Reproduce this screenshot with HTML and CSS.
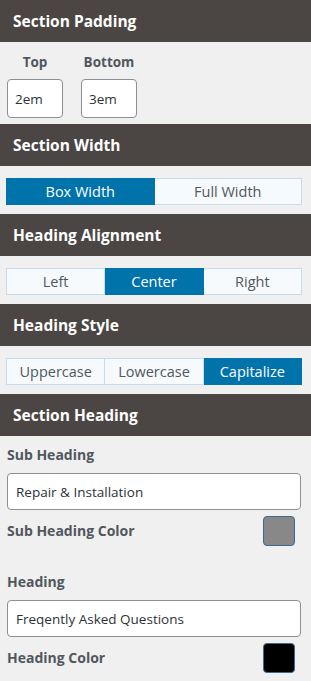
FILE: index.html
```html
<!DOCTYPE html>
<html lang="en">
<head>
    <meta charset="UTF-8">
    <meta name="viewport" content="width=device-width, initial-scale=1.0">
    <title>Section Settings</title>
    <link rel="stylesheet" href="styles.css">
</head>
<body>
    <div class="panel">
        <h3 class="panel-head">Section Padding</h3>
        <div class="panel-body padding-body">
            <div class="pad-field">
                <label class="pad-label">Top</label>
                <input class="pad-input" type="text" value="2em">
            </div>
            <div class="pad-field">
                <label class="pad-label">Bottom</label>
                <input class="pad-input" type="text" value="3em">
            </div>
        </div>

        <h3 class="panel-head">Section Width</h3>
        <div class="panel-body group-body">
            <div class="btn-group">
                <button class="active">Box Width</button>
                <button>Full Width</button>
            </div>
        </div>

        <h3 class="panel-head">Heading Alignment</h3>
        <div class="panel-body group-body">
            <div class="btn-group">
                <button>Left</button>
                <button class="active">Center</button>
                <button>Right</button>
            </div>
        </div>

        <h3 class="panel-head">Heading Style</h3>
        <div class="panel-body group-body">
            <div class="btn-group">
                <button>Uppercase</button>
                <button>Lowercase</button>
                <button class="active">Capitalize</button>
            </div>
        </div>

        <h3 class="panel-head">Section Heading</h3>
        <div class="panel-body heading-body">
            <label class="field-label">Sub Heading</label>
            <input class="text-input" type="text" value="Repair &amp; Installation">
            <div class="color-row">
                <label class="field-label">Sub Heading Color</label>
                <span class="swatch swatch-gray"></span>
            </div>

            <label class="field-label heading-label">Heading</label>
            <input class="text-input" type="text" value="Freqently Asked Questions">
            <div class="color-row">
                <label class="field-label">Heading Color</label>
                <span class="swatch swatch-black"></span>
            </div>
        </div>
    </div>
</body>
</html>
```

FILE: styles.css
```css
body {
    margin: 0;
    background-color: #f0f0f0;
    font-family: "Open Sans", "Noto Sans", sans-serif;
}
.panel {
    width: 311px;
}
.panel-head {
    margin: 0;
    height: 42px;
    line-height: 42px;
    padding-left: 13px;
    background-color: #4b4644;
    color: #fff;
    font-size: 15.5px;
    font-weight: 700;
}
.panel-body {
    background-color: #f0f0f0;
}
.padding-body {
    display: flex;
    gap: 18px;
    padding: 10px 7px 6px;
}
.pad-field {
    display: flex;
    flex-direction: column;
    align-items: center;
    gap: 7px;
}
.pad-label {
    line-height: 20px;
    font-size: 13.5px;
    font-weight: 700;
    color: #50575e;
}
.pad-input {
    box-sizing: border-box;
    width: 56px;
    height: 39px;
    padding: 0 7px;
    border: 1px solid #8c8f94;
    border-radius: 4px;
    background: #fff;
    font-family: inherit;
    font-size: 13.5px;
    color: #2c3338;
}
.group-body {
    padding: 12px 9px 9px 6px;
}
.btn-group {
    display: flex;
    height: 27px;
}
.btn-group button {
    flex: 1;
    margin: 0;
    padding: 0;
    background-color: #f7fafc;
    border: 1px solid #c5dcef;
    border-left: none;
    font-family: inherit;
    font-size: 14.5px;
    color: #50575e;
    cursor: pointer;
}
.btn-group button:first-child {
    border-left: 1px solid #c5dcef;
}
.btn-group button.active {
    background-color: #0073aa;
    border-color: #0073aa;
    color: #fff;
}
.heading-body {
    padding: 9px 10px 0 7px;
    height: 245px;
    box-sizing: border-box;
}
.field-label {
    display: block;
    line-height: 20px;
    font-size: 14px;
    font-weight: 700;
    color: #50575e;
}
.heading-label {
    margin-top: 26px;
}
.text-input {
    box-sizing: border-box;
    display: block;
    width: 100%;
    height: 37px;
    margin-top: 8px;
    padding: 0 8px;
    border: 1px solid #8c8f94;
    border-radius: 4px;
    background: #fff;
    font-family: inherit;
    font-size: 13.5px;
    color: #2c3338;
}
.color-row {
    display: flex;
    justify-content: space-between;
    align-items: center;
    margin-top: 6px;
    padding-right: 6px;
}
.swatch {
    box-sizing: border-box;
    width: 32px;
    height: 30px;
    border: 1px solid #3a6a91;
    border-radius: 4px;
}
.swatch-gray {
    background-color: #888;
}
.swatch-black {
    background-color: #000;
}
```
